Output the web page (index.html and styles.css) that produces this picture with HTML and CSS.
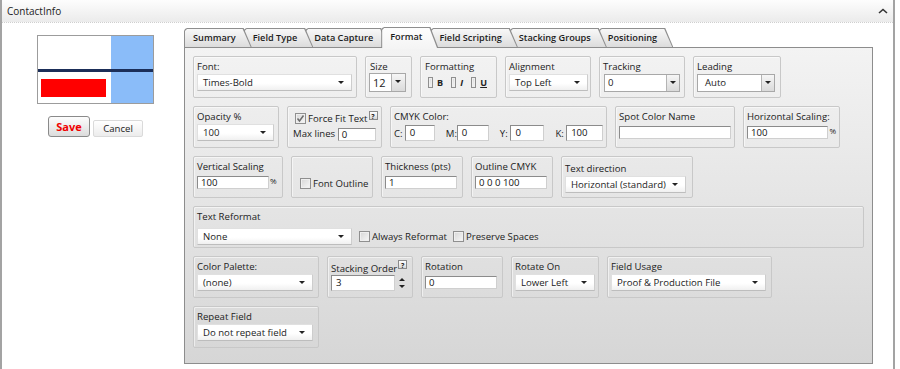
FILE: index.html
```html
<!DOCTYPE html>
<html>
  <head>
    <meta charset="UTF-8">
    <title>ContactInfo</title>
    <link rel="stylesheet" href="styles.css">
  </head>
  <body>
    <div class="window">
      <div class="titlebar">
        <span>ContactInfo</span>
        <svg class="caret" width="10" height="6" viewBox="0 0 10 6"><polyline points="1,5 5,1.5 9,5" fill="none" stroke="#333" stroke-width="1.6"/></svg>
      </div>

      <div class="content">
        <div class="preview-col">
          <div class="preview">
            <div class="pv-blue"></div>
            <div class="pv-rule"></div>
            <div class="pv-box"></div>
          </div>
          <div class="actions">
            <button class="btn btn-save">Save</button>
            <button class="btn btn-cancel">Cancel</button>
          </div>
        </div>

        <div class="tabset">
          <div class="tabs">
            <div class="tab t1">Summary</div>
            <div class="tab t2">Field Type</div>
            <div class="tab t3">Data Capture</div>
            <div class="tab t4 active">Format</div>
            <div class="tab t5">Field Scripting</div>
            <div class="tab t6">Stacking Groups</div>
            <div class="tab t7">Positioning</div>
          </div>

          <div class="panel">
            <!-- row 1 -->
            <div class="row">
              <div class="grp g-font">
                <span class="lbl">Font:</span>
                <div class="combo w155">Times-Bold</div>
              </div>
              <div class="grp g-size">
                <span class="lbl">Size</span>
                <div class="box-combo size"><span class="val">12</span><span class="drop"></span></div>
              </div>
              <div class="grp g-fmt">
                <span class="lbl">Formatting</span>
                <div class="checks">
                  <span class="chk"></span><b>B</b>
                  <span class="chk"></span><b><i>I</i></b>
                  <span class="chk"></span><b><u>U</u></b>
                </div>
              </div>
              <div class="grp g-align">
                <span class="lbl">Alignment</span>
                <div class="combo w79">Top Left</div>
              </div>
              <div class="grp g-track">
                <span class="lbl">Tracking</span>
                <div class="box-combo track"><span class="val">0</span><span class="drop"></span></div>
              </div>
              <div class="grp g-lead">
                <span class="lbl">Leading</span>
                <div class="box-combo lead"><span class="val">Auto</span><span class="drop"></span></div>
              </div>
            </div>

            <!-- row 2 -->
            <div class="row">
              <div class="grp g-opacity">
                <span class="lbl">Opacity %</span>
                <div class="combo w77">100</div>
              </div>
              <div class="grp g-force">
                <div class="ff-line">
                  <span class="chk on"><svg width="9" height="9" viewBox="0 0 9 9"><path d="M1.5 4.5 L3.5 7 L7.5 1.5" stroke="#6c6c6c" fill="none" stroke-width="1.5"/></svg></span>
                  Force Fit Text<span class="help">?</span>
                </div>
                <div class="ml-line">Max lines <span class="inp w38">0</span></div>
              </div>
              <div class="grp g-cmyk">
                <span class="lbl">CMYK Color:</span>
                <div class="cmyk">
                  <span class="k-lbl">C:</span><span class="inp tall w31">0</span>
                  <span class="k-lbl">M:</span><span class="inp tall w33">0</span>
                  <span class="k-lbl">Y:</span><span class="inp tall w35">0</span>
                  <span class="k-lbl">K:</span><span class="inp tall w38">100</span>
                </div>
              </div>
              <div class="grp g-spot">
                <span class="lbl">Spot Color Name</span>
                <span class="inp w112"></span>
              </div>
              <div class="grp g-hscale">
                <span class="lbl">Horizontal Scaling:</span>
                <div class="pct-line"><span class="inp w82">100</span><span class="pct">%</span></div>
              </div>
            </div>

            <!-- row 3 -->
            <div class="row">
              <div class="grp g-vscale">
                <span class="lbl">Vertical Scaling</span>
                <div class="pct-line"><span class="inp w72">100</span><span class="pct">%</span></div>
              </div>
              <div class="grp g-outline">
                <div class="outline-line"><span class="chk"></span>Font Outline</div>
              </div>
              <div class="grp g-thick">
                <span class="lbl">Thickness (pts)</span>
                <span class="inp w72">1</span>
              </div>
              <div class="grp g-ocmyk">
                <span class="lbl">Outline CMYK</span>
                <span class="inp w72">0 0 0 100</span>
              </div>
              <div class="grp g-dir">
                <span class="lbl">Text direction</span>
                <div class="combo w121">Horizontal (standard)</div>
              </div>
            </div>

            <!-- row 4 -->
            <div class="row">
              <div class="grp g-reformat">
                <span class="lbl">Text Reformat</span>
                <div class="reformat-line">
                  <div class="combo w155">None</div>
                  <span class="chk"></span>Always Reformat
                  <span class="chk"></span>Preserve Spaces
                </div>
              </div>
            </div>

            <!-- row 5 -->
            <div class="row">
              <div class="grp g-palette">
                <span class="lbl">Color Palette:</span>
                <div class="combo w116">(none)</div>
              </div>
              <div class="grp g-stack">
                <span class="lbl">Stacking Order<span class="help">?</span></span>
                <div class="spin-line"><span class="inp tall w64">3</span><span class="spinner"></span></div>
              </div>
              <div class="grp g-rot">
                <span class="lbl">Rotation</span>
                <span class="inp w72">0</span>
              </div>
              <div class="grp g-roton">
                <span class="lbl">Rotate On</span>
                <div class="combo w80">Lower Left</div>
              </div>
              <div class="grp g-usage">
                <span class="lbl">Field Usage</span>
                <div class="combo w155">Proof &amp; Production File</div>
              </div>
            </div>

            <!-- row 6 -->
            <div class="row">
              <div class="grp g-repeat">
                <span class="lbl">Repeat Field</span>
                <div class="combo w116">Do not repeat field</div>
              </div>
            </div>
          </div>
        </div>
      </div>
    </div>
  </body>
</html>
```

FILE: styles.css
```css
body {
  margin: 0;
  font-family: "Open Sans", "Noto Sans", sans-serif;
  font-size: 9.6px;
  color: #222;
  background: #fff;
}

.window {
  width: 891px;
  height: 369px;
  border-left: 2px solid #a3a3a3;
  border-right: 2px solid #a3a3a3;
  overflow: hidden;
}

.titlebar {
  height: 22px;
  border-bottom: 1px dotted #cfcfcf;
  background: linear-gradient(#fdfdfd, #ebebeb);
  display: flex;
  align-items: center;
  justify-content: space-between;
  padding: 0 5px 0 5px;
  font-size: 10px;
}

.caret {
  margin-top: -1px;
}

.content {
  display: flex;
  height: 346px;
}

/* left preview */

.preview-col {
  width: 182px;
  flex: none;
  box-sizing: border-box;
  padding: 12px 0 0 35px;
}

.preview {
  position: relative;
  width: 117px;
  height: 69px;
  box-sizing: border-box;
  border: 1px solid #9c9c9c;
  background: #fff;
}

.pv-blue {
  position: absolute;
  top: 0;
  right: 0;
  bottom: 0;
  width: 42px;
  background: #8abcf9;
}

.pv-rule {
  position: absolute;
  left: 0;
  right: 0;
  top: 33px;
  height: 3px;
  background: #1b2e59;
}

.pv-box {
  position: absolute;
  left: 3px;
  top: 43px;
  width: 65px;
  height: 18px;
  background: #ff0000;
}

.actions {
  display: flex;
  align-items: flex-end;
  margin: 12px 0 0 11px;
}

.btn {
  font-family: inherit;
  padding: 0;
  box-sizing: border-box;
}

.btn-save {
  width: 42px;
  height: 21px;
  border: 1px solid #8a8a8a;
  border-radius: 3px;
  background: linear-gradient(#fdfdfd, #dcdcdc);
  color: #f00000;
  font-weight: 700;
  font-size: 11px;
}

.btn-cancel {
  width: 50px;
  height: 17px;
  margin-left: 3px;
  border: 1px solid #dadada;
  border-radius: 2px;
  background: linear-gradient(#fff, #ececec);
  color: #222;
  font-size: 9.6px;
}

/* tabs */

.tabset {
  margin-top: 4px;
  width: 689px;
  display: flex;
  flex-direction: column;
}

.tabs {
  display: flex;
  align-items: flex-end;
  height: 20px;
}

.tab {
  position: relative;
  height: 19px;
  line-height: 19px;
  padding: 0 16px 0 9px;
  margin-right: -8px;
  font-weight: 600;
  font-size: 9.2px;
  color: #1c1c1c;
  white-space: nowrap;
}

.tab::before {
  content: "";
  position: absolute;
  top: 0;
  left: 0;
  right: 0;
  bottom: 0;
  background: #8e8e8e;
  clip-path: polygon(0 3px, 1px 1px, 3px 0, calc(100% - 8px) 0, 100% 100%, 0 100%);
  z-index: -1;
}

.tab::after {
  content: "";
  position: absolute;
  top: 1px;
  left: 1px;
  right: 1px;
  bottom: 0;
  background: linear-gradient(#f8f8f8, #dcdcdc);
  clip-path: polygon(0 2px, 2px 0, calc(100% - 8px) 0, 100% 100%, 0 100%);
  z-index: -1;
}

.t1 { z-index: 7; }
.t2 { z-index: 6; }
.t3 { z-index: 5; }
.t5 { z-index: 3; }
.t6 { z-index: 2; }
.t7 { z-index: 1; }

.tab.active {
  z-index: 9;
  height: 21px;
  margin-bottom: -1px;
  line-height: 20px;
}

.tab.active::after {
  bottom: -1px;
  background: linear-gradient(#fdfdfd, #f4f4f4);
}

/* panel */

.panel {
  height: 317px;
  box-sizing: border-box;
  border: 1px solid #8d8d8d;
  background: linear-gradient(#f3f3f3, #d6d6d6);
  padding: 8px 0 0 8px;
}

.row {
  display: flex;
  gap: 8px;
  margin-bottom: 8px;
}

.grp {
  height: 42px;
  box-sizing: border-box;
  border: 1px solid #c8c8c8;
  border-radius: 2px;
  padding: 3px 3px 0;
  box-shadow: inset 1px 1px 0 rgba(255, 255, 255, 0.55);
}

.lbl {
  display: block;
  height: 14px;
  line-height: 14px;
  white-space: nowrap;
}

.g-font { width: 164px; }
.g-size { width: 47px; }
.g-fmt { width: 77px; }
.g-align { width: 86px; }
.g-track { width: 86px; }
.g-lead { width: 88px; }
.g-opacity { width: 86px; }
.g-force { width: 95px; }
.g-cmyk { width: 217px; }
.g-spot { width: 120px; }
.g-hscale { width: 97px; }
.g-vscale { width: 90px; }
.g-outline { width: 82px; }
.g-thick { width: 82px; }
.g-ocmyk { width: 82px; }
.g-dir { width: 132px; }
.g-reformat { width: 671px; }
.g-palette { width: 126px; }
.g-stack { width: 86px; }
.g-rot { width: 82px; }
.g-roton { width: 88px; }
.g-usage { width: 165px; }
.g-repeat { width: 126px; }

.g-size .lbl,
.g-fmt .lbl {
  padding-left: 1px;
}

.g-dir .lbl {
  margin-top: 2px;
}

/* controls */

.combo {
  position: relative;
  height: 17px;
  line-height: 16px;
  box-sizing: border-box;
  padding-left: 5px;
  background: linear-gradient(#fff 55%, #f0f0f0);
  border: 1px solid #e0e0e0;
  border-right-color: #cdcdcd;
  border-bottom-color: #bdbdbd;
  white-space: nowrap;
  color: #1c1c1c;
}

.combo::after {
  content: "";
  position: absolute;
  right: 7px;
  top: 6px;
  border-left: 3px solid transparent;
  border-right: 3px solid transparent;
  border-top: 3px solid #222;
}

.w155 { width: 155px; }
.w121 { width: 121px; }
.w116 { width: 116px; }
.w80 { width: 80px; }
.w79 { width: 79px; }
.w77 { width: 77px; }

.box-combo {
  display: flex;
  height: 18px;
  box-sizing: border-box;
  border: 1px solid #a8a8a8;
  background: #fff;
  line-height: 16px;
}

.box-combo .val {
  flex: 1;
  padding-left: 3px;
}

.box-combo .drop {
  position: relative;
  width: 12px;
  border-left: 1px solid #b4b4b4;
  background: linear-gradient(#f6f6f6, #dadada);
}

.box-combo .drop::after {
  content: "";
  position: absolute;
  left: 3px;
  top: 6px;
  border-left: 3px solid transparent;
  border-right: 3px solid transparent;
  border-top: 3px solid #222;
}

.box-combo.size {
  width: 37px;
  height: 19px;
  margin-top: -1px;
  font-size: 11px;
  line-height: 17px;
}

.box-combo.size .drop {
  width: 13px;
}

.box-combo.track {
  width: 76px;
  margin-left: 1px;
}

.box-combo.lead {
  width: 78px;
}

.box-combo.lead .val {
  padding-left: 7px;
}

.inp {
  display: inline-block;
  height: 13px;
  line-height: 11px;
  box-sizing: border-box;
  vertical-align: middle;
  border: 1px solid;
  border-color: #8b8b8b #cfcfcf #cfcfcf #8b8b8b;
  background: #fff;
  padding-left: 3px;
  color: #111;
}

.inp.tall {
  height: 16px;
  line-height: 14px;
  padding-left: 4px;
}

.w31 { width: 31px; }
.w33 { width: 33px; }
.w35 { width: 35px; }
.w38 { width: 38px; }
.w64 { width: 64px; }
.w72 { width: 72px; }
.w82 { width: 82px; }
.w112 { width: 112px; }

.chk {
  display: inline-block;
  width: 11px;
  height: 11px;
  box-sizing: border-box;
  vertical-align: middle;
  border: 1px solid #8f8f8f;
  background: linear-gradient(135deg, #d6d6d6, #f7f7f7);
  box-shadow: inset 0 0 0 1px #efefef;
  margin-right: 2px;
  position: relative;
}

.chk svg {
  position: absolute;
  left: 0;
  top: 0;
}

.help {
  display: inline-block;
  width: 9px;
  height: 9px;
  line-height: 9px;
  box-sizing: border-box;
  border: 1px solid #8a8a8a;
  background: linear-gradient(#fff, #d8d8d8);
  font-size: 7px;
  font-weight: 700;
  text-align: center;
  vertical-align: 4px;
  margin-left: 1px;
}

.checks {
  display: flex;
  align-items: center;
  gap: 2px;
  margin: 2px 0 0 4px;
  font-size: 9px;
}

.checks b {
  margin-right: 6px;
}

.ff-line {
  display: flex;
  align-items: center;
  height: 15px;
  padding-left: 4px;
  white-space: nowrap;
  margin-top: 1px;
}

.ff-line .help {
  align-self: flex-start;
  margin-top: 0;
}

.ml-line {
  padding-left: 2px;
  margin-top: 1px;
  white-space: nowrap;
}

.cmyk {
  display: flex;
  align-items: center;
  margin-top: 1px;
  white-space: nowrap;
}

.k-lbl {
  margin: 0 2px 0 0;
  width: 9px;
}

.cmyk .inp + .k-lbl {
  margin-left: 11px;
}

.pct-line {
  display: flex;
  align-items: center;
  margin-top: 2px;
}

.pct {
  font-size: 8px;
  margin-left: 1px;
  align-self: flex-start;
  margin-top: -1px;
}

.g-spot .inp,
.g-thick .inp,
.g-ocmyk .inp,
.g-rot .inp {
  margin-top: 2px;
}

.outline-line {
  display: flex;
  align-items: center;
  padding: 17px 0 0 5px;
  white-space: nowrap;
}

.reformat-line {
  display: flex;
  align-items: center;
  margin-top: 4px;
  white-space: nowrap;
}

.reformat-line .combo {
  margin-right: 7px;
}

.reformat-line .chk:nth-of-type(2) {
  margin-left: 6px;
}

.spin-line {
  display: flex;
  align-items: center;
  margin-top: 1px;
}

.spinner {
  position: relative;
  width: 7px;
  height: 14px;
  margin-left: 4px;
}

.spinner::before,
.spinner::after {
  content: "";
  position: absolute;
  left: 0;
  border-left: 3px solid transparent;
  border-right: 3px solid transparent;
}

.spinner::before {
  top: 2px;
  border-bottom: 3px solid #222;
}

.spinner::after {
  bottom: 2px;
  border-top: 3px solid #222;
}
```
